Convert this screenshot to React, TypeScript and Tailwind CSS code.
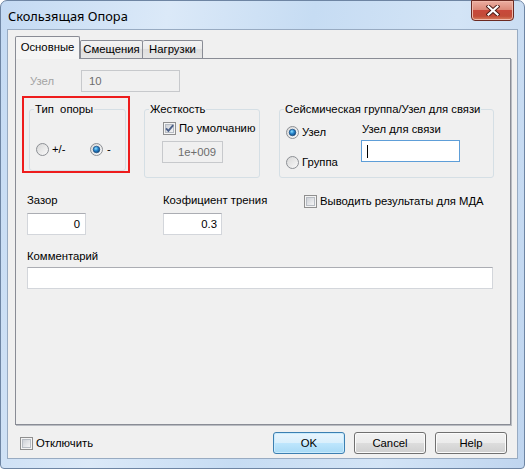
import React from 'react';

const CheckBox: React.FC<{ checked?: boolean }> = ({ checked }) => (
  <svg width="13" height="13" viewBox="0 0 13 13" className="shrink-0">
    <defs>
      <linearGradient id="cbInner" x1="0" y1="0" x2="1" y2="1">
        <stop offset="0" stopColor="#cbcfd5" />
        <stop offset="1" stopColor="#f7f7f7" />
      </linearGradient>
    </defs>
    <rect x="0.5" y="0.5" width="12" height="12" fill="#f4f4f4" stroke="#8f8f8f" />
    <rect x="2.5" y="2.5" width="8" height="8" fill="url(#cbInner)" stroke="#b7bcc3" />
    {checked && (
      <path d="M3 6.3 L5.4 8.8 L10.2 3.2" fill="none" stroke="#4c6088" strokeWidth="1.9" />
    )}
  </svg>
);

const Radio: React.FC<{ checked?: boolean }> = ({ checked }) => (
  <svg width="13" height="13" viewBox="0 0 13 13" className="shrink-0">
    <defs>
      <linearGradient id="rbBg" x1="0" y1="0" x2="1" y2="1">
        <stop offset="0" stopColor="#d6d6d6" />
        <stop offset="1" stopColor="#fbfbfb" />
      </linearGradient>
      <radialGradient id="rbDot" cx="0.4" cy="0.35" r="0.7">
        <stop offset="0" stopColor="#8fe0ff" />
        <stop offset="0.45" stopColor="#2b8ad1" />
        <stop offset="1" stopColor="#0c3f74" />
      </radialGradient>
    </defs>
    <circle cx="6.5" cy="6.5" r="6" fill="url(#rbBg)" stroke="#8c8f94" />
    {checked && <circle cx="6.5" cy="6.5" r="3.3" fill="url(#rbDot)" stroke="#1a4a7c" strokeWidth="0.7" />}
  </svg>
);

const GroupBox: React.FC<{ title: string; className: string; children?: React.ReactNode }> = ({
  title,
  className,
  children,
}) => (
  <div className={`rounded-[3px] border border-[#d5dfe5] ${className}`}>
    <div className="-mt-[8px] ml-[4px] w-fit whitespace-pre bg-[#f0f0f0] px-[1px] leading-[14px]">{title}</div>
    {children}
  </div>
);

const Button: React.FC<{ label: string; primary?: boolean }> = ({ label, primary }) => (
  <div
    className={`flex h-[22px] w-[72px] items-center justify-center rounded-[3px] border ${
      primary
        ? 'border-[#3c7fb1] bg-[linear-gradient(#e9f5fd,#d9effc_50%,#bee6fd_50%,#a7d9f5)] shadow-[inset_0_0_0_1px_#c9ebfd]'
        : 'border-[#707070] bg-[linear-gradient(#f2f2f2,#ebebeb_50%,#dddddd_50%,#cfcfcf)] shadow-[inset_0_0_0_1px_#fbfbfb]'
    }`}
  >
    {label}
  </div>
);

export default function App() {
  return (
    <div className="h-[469px] w-[525px] overflow-hidden bg-white font-['Liberation_Sans',Arial,sans-serif] text-[11.3px] text-black">
      <div className="flex h-full w-full flex-col rounded-t-[7px] rounded-b-[4px] border border-[#6e85a3] bg-[linear-gradient(100deg,#c4daf3_0%,#dbe9f8_28%,#c6dcf3_52%,#d3e4f6_76%,#bfd5ef_100%)]">
        {/* title bar */}
        <div className="flex h-[28px] shrink-0 items-start">
          <span className="whitespace-nowrap pl-[7px] pt-[8px] font-['Noto_Sans',sans-serif] text-[12.8px] leading-[14px]">
            Скользящая Опора
          </span>
          <div className="-mt-px ml-auto mr-[10px] flex h-[21px] w-[43px] items-center justify-center rounded-b-[4px] border border-[#6b2a22] bg-[linear-gradient(#ecaea1,#dc8a79_45%,#c8483a_50%,#c24c38_80%,#d8805f)] shadow-[inset_0_0_0_1px_#f0b8aa]">
            <svg width="14" height="11" viewBox="0 0 14 11">
              <path d="M2.5 1.5 L11.5 9.5 M11.5 1.5 L2.5 9.5" stroke="#4a1a14" strokeWidth="4" strokeLinecap="square" />
              <path d="M2.5 1.5 L11.5 9.5 M11.5 1.5 L2.5 9.5" stroke="#ffffff" strokeWidth="2.2" strokeLinecap="square" />
            </svg>
          </div>
        </div>

        {/* client area */}
        <div className="ml-[6px] flex h-[430px] w-[511px] flex-col border border-[#98abc2] bg-[#f0f0f0]">
          {/* tabs */}
          <div className="flex h-[28px] shrink-0 items-end whitespace-nowrap pl-[7px]">
            <div className="relative z-10 -mb-px flex h-[23px] w-[65px] items-center justify-center rounded-t-[2px] border border-b-0 border-[#898c95] bg-[#f5f5f5] pb-[2px]">
              Основные
            </div>
            <div className="flex h-[18px] w-[63px] items-center justify-center rounded-t-[2px] border border-b-0 border-[#898c95] bg-[linear-gradient(#f3f3f3,#ebebeb_50%,#dedede_50%,#e6e6e6)] pb-[1px]">
              Смещения
            </div>
            <div className="flex h-[18px] w-[60px] items-center justify-center rounded-t-[2px] border border-b-0 border-l-0 border-[#898c95] bg-[linear-gradient(#f3f3f3,#ebebeb_50%,#dedede_50%,#e6e6e6)] pb-[1px]">
              Нагрузки
            </div>
          </div>

          {/* tab page */}
          <div className="ml-[7px] flex h-[367px] w-[496px] shrink-0 flex-col whitespace-nowrap border border-[#898c95] shadow-[1px_1px_0_#b9bcc2]">
            {/* Узел */}
            <div className="mt-[11px] flex h-[22px] items-center pl-[14px]">
              <span className="w-[51px] text-[#a3a3a3]">Узел</span>
              <div className="flex h-[22px] w-[99px] items-center border border-[#c7c9cc] bg-[#f0f0f0] pl-[7px] text-[#6d6d6d]">
                10
              </div>
            </div>

            {/* group boxes */}
            <div className="mt-[4px] flex items-start">
              <div className="ml-[6px] h-[77px] w-[108px] border-2 border-[#ee1c1c]">
                <GroupBox title="Тип  опоры" className="ml-[5px] mt-[11px] h-[62px] w-[97px]">
                  <div className="mt-[27px] flex h-[13px] items-center pl-[6px]">
                    <div className="flex w-[54px] items-center gap-[3px]">
                      <Radio />
                      <span className="leading-[13px]">+/-</span>
                    </div>
                    <div className="flex items-center gap-[4px]">
                      <Radio checked />
                      <span className="leading-[13px]">-</span>
                    </div>
                  </div>
                </GroupBox>
              </div>

              <GroupBox title="Жесткость" className="ml-[14px] mt-[13px] h-[69px] w-[116px]">
                <div className="mt-[6px] flex h-[13px] items-center gap-[3px] pl-[18px]">
                  <CheckBox checked />
                  <span className="leading-[13px]">По умолчанию</span>
                </div>
                <div className="ml-[17px] mt-[6px] flex h-[22px] w-[61px] items-center justify-end border border-[#c7c9cc] bg-[#f0f0f0] pr-[6px] text-[#6d6d6d]">
                  1e+009
                </div>
              </GroupBox>

              <GroupBox title="Сейсмическая группа/Узел для связи" className="ml-[19px] mt-[13px] h-[69px] w-[215px]">
                <div className="flex">
                  <div className="flex w-[75px] flex-col pl-[6px]">
                    <div className="mt-[10px] flex h-[13px] items-center gap-[3px]">
                      <Radio checked />
                      <span className="leading-[13px]">Узел</span>
                    </div>
                    <div className="mt-[17px] flex h-[13px] items-center gap-[3px]">
                      <Radio />
                      <span className="leading-[13px]">Группа</span>
                    </div>
                  </div>
                  <div className="ml-[6px] flex flex-col">
                    <span className="mt-[6px] pl-[1px] leading-[14px]">Узел для связи</span>
                    <div className="mt-[4px] flex h-[22px] w-[99px] items-center border border-[#5e9ed8] bg-white pl-[5px]">
                      <span className="h-[13px] w-px bg-black" />
                    </div>
                  </div>
                </div>
              </GroupBox>
            </div>

            {/* Зазор / трение / МДА */}
            <div className="mt-[15px] flex items-start pl-[11px]">
              <div className="flex w-[136px] flex-col">
                <span className="leading-[14px]">Зазор</span>
                <div className="mt-[6px] flex h-[22px] w-[59px] items-center justify-end border border-[#d3d6db] border-t-[#abadb3] bg-white pr-[5px]">
                  0
                </div>
              </div>
              <div className="flex w-[141px] flex-col">
                <span className="leading-[14px]">Коэфициент трения</span>
                <div className="mt-[6px] flex h-[22px] w-[59px] items-center justify-end border border-[#d3d6db] border-t-[#abadb3] bg-white pr-[4px]">
                  0.3
                </div>
              </div>
              <div className="mt-[1px] flex h-[14px] items-center gap-[3px]">
                <CheckBox />
                <span className="leading-[14px]">Выводить результаты для МДА</span>
              </div>
            </div>

            {/* Комментарий */}
            <div className="mt-[14px] flex flex-col pl-[11px]">
              <span className="leading-[14px]">Комментарий</span>
              <div className="mt-[4px] h-[22px] w-[466px] border border-[#d3d6db] border-t-[#abadb3] bg-white" />
            </div>
          </div>

          {/* bottom row */}
          <div className="mt-[7px] flex h-[22px] items-center pl-[12px] pr-[10px]">
            <div className="flex items-center gap-[3px]">
              <CheckBox />
              <span className="leading-[14px]">Отключить</span>
            </div>
            <div className="ml-auto flex gap-[9px]">
              <Button label="OK" primary />
              <Button label="Cancel" />
              <Button label="Help" />
            </div>
          </div>
        </div>
      </div>
    </div>
  );
}
